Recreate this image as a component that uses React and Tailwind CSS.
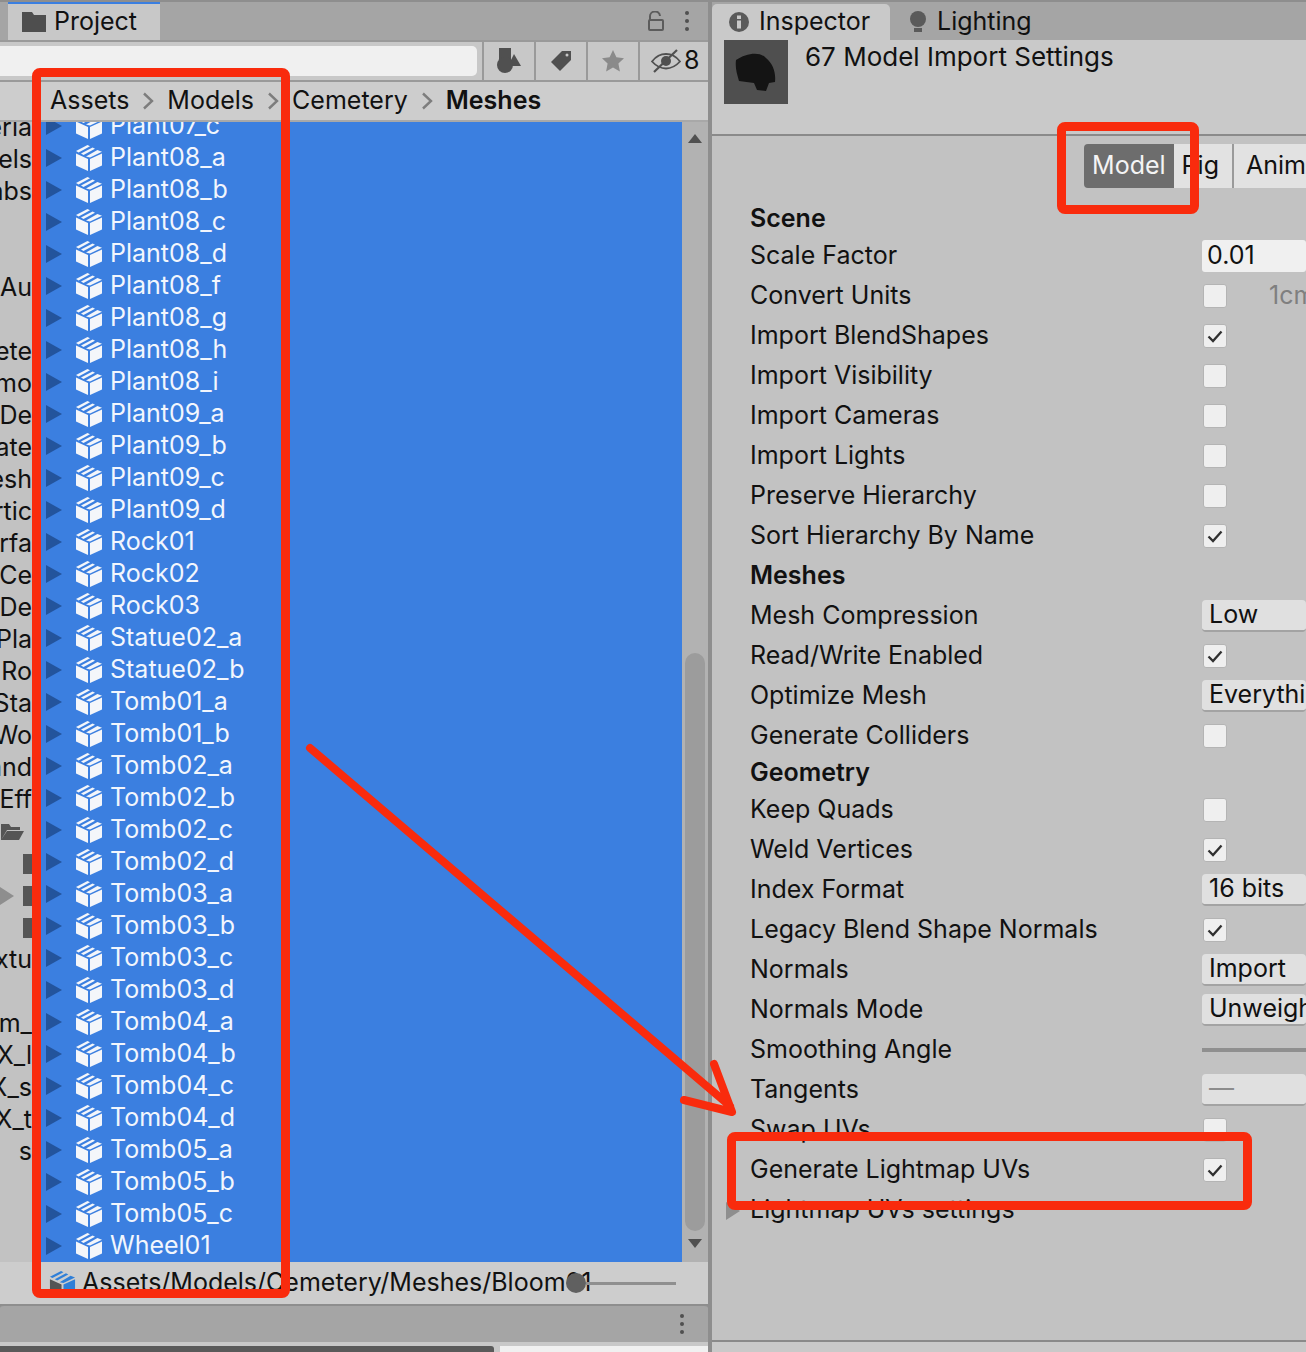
import React from "react";

const assets = [
  "Plant07_c", "Plant08_a", "Plant08_b", "Plant08_c", "Plant08_d", "Plant08_f", "Plant08_g", "Plant08_h", "Plant08_i",
  "Plant09_a", "Plant09_b", "Plant09_c", "Plant09_d", "Rock01", "Rock02", "Rock03", "Statue02_a", "Statue02_b",
  "Tomb01_a", "Tomb01_b", "Tomb02_a", "Tomb02_b", "Tomb02_c", "Tomb02_d", "Tomb03_a", "Tomb03_b", "Tomb03_c",
  "Tomb03_d", "Tomb04_a", "Tomb04_b", "Tomb04_c", "Tomb04_d", "Tomb05_a", "Tomb05_b", "Tomb05_c", "Wheel01",
];

const tree = [
  "eria", "els", "abs", "", "", "nAu", "", "ete", "emo", "De", "ate", "esh", "rtic", "erfa", "Ce", "De", "Pla", "Ro", "Sta",
  "Wo", "and", "Eff", "#folder", "#square", "#arrow", "#square", "xtu", "", "om_", "X_l", "X_s", "X_t", "s",
];

const settings = [
  { head: "Scene", h: "h-[34px]" },
  { label: "Scale Factor", input: "0.01" },
  { label: "Convert Units", check: false, note: "1cm" },
  { label: "Import BlendShapes", check: true },
  { label: "Import Visibility", check: false },
  { label: "Import Cameras", check: false },
  { label: "Import Lights", check: false },
  { label: "Preserve Hierarchy", check: false },
  { label: "Sort Hierarchy By Name", check: true },
  { head: "Meshes", h: "h-10" },
  { label: "Mesh Compression", select: "Low" },
  { label: "Read/Write Enabled", check: true },
  { label: "Optimize Mesh", select: "Everything" },
  { label: "Generate Colliders", check: false },
  { head: "Geometry", h: "h-[34px]" },
  { label: "Keep Quads", check: false },
  { label: "Weld Vertices", check: true },
  { label: "Index Format", select: "16 bits" },
  { label: "Legacy Blend Shape Normals", check: true },
  { label: "Normals", select: "Import" },
  { label: "Normals Mode", select: "Unweighted" },
  { label: "Smoothing Angle", slider: true },
  { label: "Tangents", select: "—", muted: true },
  { label: "Swap UVs", check: false },
  { label: "Generate Lightmap UVs", check: true },
  { label: "Lightmap UVs settings", fold: true },
];

function CubeIcon({ className }) {
  return (
    <svg viewBox="0 0 28 28" className={className}>
      <path d="M1 9.5 13 15v12L1 21.5z" fill="#f4f6fa" />
      <path d="M15 15 27 9.5v12L15 27z" fill="#f4f6fa" />
      <path d="M1 7 12.5 1l2.5 1.3L3.6 8.4z" fill="#f4f6fa" />
      <path d="M6 9.6 17.6 3.4l2.4 1.3L8.5 11z" fill="#f4f6fa" />
      <path d="M11 12.6 22.4 6 27 7.8 15 13.6z" fill="#f4f6fa" />
    </svg>
  );
}

function Check({ on }) {
  return (
    <div className="flex h-6 w-6 items-center justify-center rounded-[3px] border border-[#b4b4b4] bg-[#efefef]">
      {on && (
        <svg viewBox="0 0 18 18" className="h-[18px] w-[18px]">
          <path d="M2.5 9.5 7 14 15.5 4.5" fill="none" stroke="#303030" strokeWidth="2.3" />
        </svg>
      )}
    </div>
  );
}

function Field({ item }) {
  if (item.input) {
    return (
      <div className="flex h-[32px] w-[120px] items-center rounded-[3px] bg-[#f0f0f0] pl-[5px] text-[25px] text-[#111]">{item.input}</div>
    );
  }
  if (item.select) {
    return (
      <div className={`flex h-[32px] w-[120px] items-center overflow-hidden whitespace-nowrap rounded-[4px] border-b-2 border-[#a3a3a3] bg-[#e0e0e0] pl-[7px] text-[25px] ${item.muted ? "text-[#8c8c8c]" : "text-[#111]"}`}>
        {item.select}
      </div>
    );
  }
  if (item.slider) return <div className="h-[4px] w-[120px] bg-[#8f8f8f]" />;
  if (item.check !== undefined) {
    return (
      <div className="flex items-center gap-[42px] whitespace-nowrap pl-px">
        <Check on={item.check} />
        {item.note && <span className="text-[25px] text-[#7f7f7f]">{item.note}</span>}
      </div>
    );
  }
  return null;
}

function ProjectPanel() {
  return (
    <div className="flex w-[708px] flex-col">
      {/* tab strip */}
      <div className="flex h-10 shrink-0 items-end border-t-2 border-[#8e8e8e] bg-[#a5a5a5] pl-2">
        <div className="flex h-[38px] w-[152px] items-center gap-[8px] border-t-2 border-[#3b7fe0] bg-[#c8c8c8] pl-[14px] text-[25px] text-[#111]">
          <svg viewBox="0 0 24 20" className="h-5 w-6">
            <path d="M0 0h10l2 3h12v17H0z" fill="#4e4e4e" />
          </svg>
          Project
        </div>
        <div className="ml-auto flex h-full items-center gap-[20px] pr-[19px]">
          <svg viewBox="0 0 18 20" className="h-5 w-[18px]">
            <path d="M3 9V6a5 5 0 0 1 10-1" fill="none" stroke="#5c5c5c" strokeWidth="2" />
            <rect x="2" y="9" width="14" height="10" rx="1" fill="none" stroke="#5c5c5c" strokeWidth="2" />
          </svg>
          <div className="flex h-5 flex-col justify-between">
            <span className="h-1 w-1 rounded-full bg-[#505050]" />
            <span className="h-1 w-1 rounded-full bg-[#505050]" />
            <span className="h-1 w-1 rounded-full bg-[#505050]" />
          </div>
        </div>
      </div>

      {/* search toolbar */}
      <div className="flex h-[42px] shrink-0 border-y-2 border-[#9a9a9a] bg-[#c8c8c8]">
        <div className="flex w-[484px] items-center border-r-2 border-[#9a9a9a] pr-[5px]">
          <div className="h-[30px] w-full rounded-r-[5px] bg-[#f0f0f0]" />
        </div>
        <div className="flex w-[52px] items-center justify-center border-r-2 border-[#9a9a9a]">
          <svg viewBox="0 0 24 26" className="h-[26px] w-6">
            <rect x="2" y="0" width="12" height="12" fill="#505050" />
            <path d="M17 6l7 12H11z" fill="#505050" />
            <circle cx="8" cy="17" r="8" fill="#505050" />
          </svg>
        </div>
        <div className="flex w-[52px] items-center justify-center border-r-2 border-[#9a9a9a]">
          <svg viewBox="0 0 22 22" className="h-[22px] w-[22px]">
            <path d="M12 1h9v9L10 21 1 12z" fill="#505050" />
            <circle cx="17" cy="5" r="1.5" fill="#c8c8c8" />
          </svg>
        </div>
        <div className="flex w-[52px] items-center justify-center border-r-2 border-[#9a9a9a]">
          <svg viewBox="0 0 24 24" className="h-6 w-6">
            <path d="M12 1l3.4 7.3 7.6.9-5.6 5.4 1.5 8L12 18.6 5.1 22.600l1.500-8L1 9.200l7.600-.9z" fill="#8a8a8a" />
          </svg>
        </div>
        <div className="flex flex-1 items-center pl-[11px] text-[25px] text-[#111]">
          <svg viewBox="0 0 30 24" className="mr-[3px] h-6 w-[30px]">
            <path d="M1 12.500C6 6 10 5 15 5s9 1 14 7.500C24 18 20 19.500 15 19.500S6 18 1 12.500z" fill="none" stroke="#505050" strokeWidth="1.800" />
            <circle cx="15" cy="12" r="5" fill="#505050" />
            <path d="M3 23 26 1" stroke="#505050" strokeWidth="2.200" />
          </svg>
          8
        </div>
      </div>

      {/* breadcrumb */}
      <div className="flex h-10 shrink-0 items-center whitespace-nowrap border-b-2 border-[#a8a8a8] bg-[#cdcdcd] pl-[50px] text-[25px] text-[#111]">
        <span>Assets</span>
        <Chevron />
        <span>Models</span>
        <Chevron />
        <span>Cemetery</span>
        <Chevron />
        <span className="font-semibold">Meshes</span>
      </div>

      {/* file list */}
      <div className="flex h-[1140px] shrink-0 overflow-hidden bg-[#c2c2c2]">
        <div className="-mt-[10px] w-[32px] shrink-0 text-[25px] text-[#111]">
          {tree.map((t, i) => (
            <TreeRow key={i} value={t} />
          ))}
        </div>
        <div className="w-[8px] shrink-0" />
        <div className="w-[642px] shrink-0 overflow-hidden bg-[#3b7fe0]">
          <div className="-mt-[12px]">
            {assets.map((name) => (
              <div key={name} className="flex h-8 items-center text-[25px] text-[#f2f6fd]">
                <svg viewBox="0 0 16 18" className="ml-[6px] h-[18px] w-4">
                  <path d="M0 0l16 9-16 9z" fill="#23549c" />
                </svg>
                <CubeIcon className="ml-[13px] h-7 w-7" />
                <span className="ml-[7px]">{name}</span>
              </div>
            ))}
          </div>
        </div>
        <div className="flex w-[26px] shrink-0 flex-col items-center bg-[#b2b2b2] pt-[12px]">
          <span className="h-0 w-0 border-x-[7px] border-b-[9px] border-x-transparent border-b-[#505050]" />
          <div className="mt-[510px] h-[578px] w-[20px] rounded-full bg-[#9c9c9c]" />
          <span className="mt-[8px] h-0 w-0 border-x-[7px] border-t-[9px] border-x-transparent border-t-[#505050]" />
        </div>
      </div>

      {/* status */}
      <div className="flex h-[42px] shrink-0 items-center whitespace-nowrap bg-[#cdcdcd] text-[25px] text-[#111]">
        <svg viewBox="0 0 28 28" className="ml-[49px] h-[27px] w-[27px]">
          <path d="M1 9.500 13 15v12L1 21.500z" fill="#555" />
          <path d="M15 15 27 9.500v12L15 27z" fill="#2f7fd8" />
          <path d="M1 7 12.500 1l2.500 1.300L3.600 8.400zM6 9.600 17.600 3.400l2.400 1.300L8.500 11zM11 12.600 22.400 6 27 7.800 15 13.600z" fill="#2f7fd8" />
        </svg>
        <span className="ml-[6px] w-[484px]">Assets/Models/Cemetery/Meshes/Bloom01</span>
        <span className="h-5 w-5 shrink-0 rounded-full bg-[#606060]" />
        <span className="h-[3px] w-[90px] bg-[#8f8f8f]" />
      </div>

      {/* bottom panel */}
      <div className="flex h-[38px] shrink-0 items-center justify-end rounded-t-[4px] border-t-2 border-[#8e8e8e] bg-[#a5a5a5] pr-[24px]">
        <div className="flex h-5 flex-col justify-between">
          <span className="h-1 w-1 rounded-full bg-[#505050]" />
          <span className="h-1 w-1 rounded-full bg-[#505050]" />
          <span className="h-1 w-1 rounded-full bg-[#505050]" />
        </div>
      </div>
      <div className="flex flex-1 bg-[#c8c8c8] pt-[4px]">
        <div className="h-[6px] w-[494px] rounded-tr-[3px] bg-[#5a5a5a]" />
        <div className="ml-[6px] h-[6px] flex-1 bg-[#f0f0f0]" />
      </div>
    </div>
  );
}

function Chevron() {
  return (
    <svg viewBox="0 0 12 18" className="mx-[13px] h-[18px] w-3">
      <path d="M2 1.500 10 9l-8 7.500" fill="none" stroke="#7d7d7d" strokeWidth="2.400" />
    </svg>
  );
}

function TreeRow({ value }) {
  return (
    <div className="flex h-8 items-center justify-end overflow-hidden whitespace-nowrap">
      {value === "#folder" && (
        <svg viewBox="0 0 24 20" className="mr-[8px] h-5 w-6 shrink-0">
          <path d="M1 18V2h8l2 3h9v3H7L1 18z M7 9h17l-5 9H1z" fill="#555" />
        </svg>
      )}
      {value === "#square" && <span className="h-5 w-[9px] bg-[#555]" />}
      {value === "#arrow" && (
        <>
          <svg viewBox="0 0 14 18" className="mr-[9px] h-[18px] w-[14px]">
            <path d="M0 0l14 9-14 9z" fill="#8e8e8e" />
          </svg>
          <span className="h-5 w-[9px] bg-[#555]" />
        </>
      )}
      {value && !value.startsWith("#") && <span>{value}</span>}
    </div>
  );
}

function InspectorPanel() {
  return (
    <div className="flex flex-1 flex-col overflow-hidden bg-[#c2c2c2]">
      <div className="flex h-10 shrink-0 items-end border-t-2 border-[#8e8e8e] bg-[#a5a5a5] text-[25px] text-[#111]">
        <div className="flex h-[36px] w-[178px] items-center gap-[10px] rounded-t-[5px] bg-[#c9c9c9] pl-[17px]">
          <svg viewBox="0 0 20 20" className="h-5 w-5">
            <circle cx="10" cy="10" r="10" fill="#5a5a5a" />
            <rect x="8" y="8.500" width="4" height="8" fill="#c9c9c9" />
            <rect x="8" y="3.500" width="4" height="3.500" fill="#c9c9c9" />
          </svg>
          Inspector
        </div>
        <div className="flex h-[36px] items-center gap-[10px] pl-[19px]">
          <svg viewBox="0 0 18 22" className="h-[22px] w-[18px]">
            <circle cx="9" cy="8" r="8" fill="#5a5a5a" />
            <rect x="5" y="17" width="8" height="4" fill="#5a5a5a" />
          </svg>
          Lighting
        </div>
      </div>

      <div className="flex h-[96px] shrink-0 border-b-2 border-[#8a8a8a] bg-[#c9c9c9] pl-[12px]">
        <div className="flex h-16 w-16 items-center justify-center bg-[#4f4f4f]">
          <svg viewBox="0 0 44 44" className="h-11 w-11">
            <path d="M2 10C12 3 26 1 32 8c7 6 10 14 9 24l-6 1-3 8-9-1-3-7-15-2C3 24 1 18 2 10z" fill="#141414" />
          </svg>
        </div>
        <div className="ml-[17px] whitespace-nowrap text-[26px] leading-[34px] text-[#111]">67 Model Import Settings</div>
      </div>

      <div className="flex h-[66px] shrink-0 items-start pl-[372px] pt-[8px] text-[25px] text-[#111]">
        <div className="flex h-[44px] w-[91px] items-center justify-center rounded-l-[4px] bg-[#6d6d6d] text-[#f4f4f4]">Model</div>
        <div className="flex h-[44px] w-[61px] items-center justify-end border-r-2 border-[#9a9a9a] bg-[#e2e2e2] pr-[13px]">Rig</div>
        <div className="flex h-[44px] flex-1 items-center bg-[#e2e2e2] pl-[12px]">Anim</div>
      </div>

      <div className="text-[25px] text-[#111]">
        {settings.map((item) =>
          item.head ? (
            <div key={item.head} className={`flex items-center pl-[38px] font-semibold ${item.h}`}>
              {item.head}
            </div>
          ) : (
            <div key={item.label} className="relative flex h-10 items-center pl-[38px]">
              {item.fold && <span className="absolute left-[14px] top-[12px] h-0 w-0 border-y-[9px] border-l-[14px] border-y-transparent border-l-[#8e8e8e]" />}
              <span className="w-[452px] shrink-0 whitespace-nowrap">{item.label}</span>
              <Field item={item} />
            </div>
          )
        )}
      </div>

      <div className="mt-auto h-[12px] shrink-0 border-t-2 border-[#8a8a8a] bg-[#c9c9c9]" />
    </div>
  );
}

function Annotations() {
  return (
    <>
      <div className="absolute left-[32px] top-[68px] h-[1230px] w-[258px] rounded-[8px] border-[9px] border-[#f92b0d]" />
      <div className="absolute left-[1057px] top-[122px] h-[92px] w-[142px] rounded-[8px] border-[9px] border-[#f92b0d]" />
      <div className="absolute left-[727px] top-[1132px] h-[78px] w-[525px] rounded-[8px] border-[9px] border-[#f92b0d]" />
      <svg viewBox="0 0 1306 1352" className="pointer-events-none absolute left-0 top-0 h-[1352px] w-[1306px]">
        <path d="M310 748 730 1106M714 1064 732 1112 684 1100" fill="none" stroke="#f92b0d" strokeWidth="8" strokeLinecap="round" strokeLinejoin="round" />
      </svg>
    </>
  );
}

export default function App() {
  return (
    <div className="relative flex h-[1352px] w-[1306px] overflow-hidden bg-[#8e8e8e] font-[Inter,sans-serif]">
      <ProjectPanel />
      <div className="w-[4px] shrink-0 bg-[#8e8e8e]" />
      <InspectorPanel />
      <Annotations />
    </div>
  );
}
